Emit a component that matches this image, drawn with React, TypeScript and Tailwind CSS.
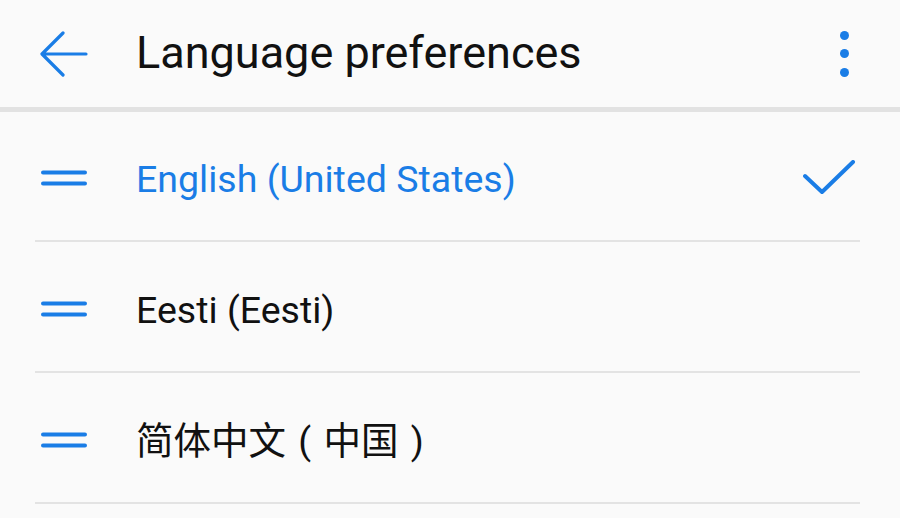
const BLUE = "#1a7de6";

type Lang = { label: React.ReactNode; key: string; active: boolean };

const languages: Lang[] = [
  { key: "en", label: "English (United States)", active: true },
  { key: "et", label: "Eesti (Eesti)", active: false },
  {
    key: "zh",
    label: (
      <>
        简体中文
        <span className="inline-block w-[1em] text-center">(</span>
        中国
        <span className="inline-block w-[1em] text-center">)</span>
      </>
    ),
    active: false,
  },
];

function DragHandle() {
  return (
    <svg width="46" height="16" viewBox="0 0 46 16" className="shrink-0">
      <line x1="2" y1="2.5" x2="44" y2="2.5" stroke={BLUE} strokeWidth="4" strokeLinecap="round" />
      <line x1="2" y1="13.5" x2="44" y2="13.5" stroke={BLUE} strokeWidth="4" strokeLinecap="round" />
    </svg>
  );
}

export default function App() {
  return (
    <div
      className="w-[900px] h-[518px] overflow-hidden bg-[#fafafa]"
      style={{ fontFamily: "Roboto, 'Noto Sans CJK SC', sans-serif" }}
    >
      {/* Header */}
      <div className="h-[107px] flex items-center">
        <div className="w-[136px] pl-[40px] flex items-center">
          <svg width="48" height="46" viewBox="0 0 48 46">
            <path
              d="M46 23 H3 M23 2 L2 23 L23 44"
              fill="none"
              stroke={BLUE}
              strokeWidth="3.2"
              strokeLinecap="round"
              strokeLinejoin="round"
            />
          </svg>
        </div>
        <h1 className="flex-1 text-[45px] text-[#111] leading-none pb-[2px]">
          Language preferences
        </h1>
        <div className="w-[110px] flex flex-col items-center gap-[9.5px] pr-[2px]">
          <span className="w-[9px] h-[9px] rounded-full bg-[#1a7de6]" />
          <span className="w-[9px] h-[9px] rounded-full bg-[#1a7de6]" />
          <span className="w-[9px] h-[9px] rounded-full bg-[#1a7de6]" />
        </div>
      </div>
      <div className="h-[5px] bg-[#e2e2e2]" />

      {/* Language list */}
      <div className="flex flex-col">
        {languages.map((lang, i) => (
          <div key={lang.key} className="pl-[35px] pr-[40px]">
            <div
              className={`${
                i === 0 ? "h-[130px]" : "h-[131px]"
              } flex items-center border-b-2 border-[#e3e3e3]`}
            >
              <div className="w-[101px] pl-[6px] flex items-center pt-[4px]">
                <DragHandle />
              </div>
              <span
                className={`flex-1 text-[37.5px] leading-none pt-[8px] ${
                  lang.active ? "text-[#1a7de6]" : "text-[#111]"
                }`}
              >
                {lang.label}
              </span>
              {lang.active && (
                <svg width="56" height="36" viewBox="0 0 56 36" className="mr-[1px] mt-[4px]">
                  <path
                    d="M2 16 L19 32 L50 2"
                    fill="none"
                    stroke={BLUE}
                    strokeWidth="4"
                    strokeLinecap="round"
                    strokeLinejoin="round"
                  />
                </svg>
              )}
            </div>
          </div>
        ))}
      </div>
    </div>
  );
}
